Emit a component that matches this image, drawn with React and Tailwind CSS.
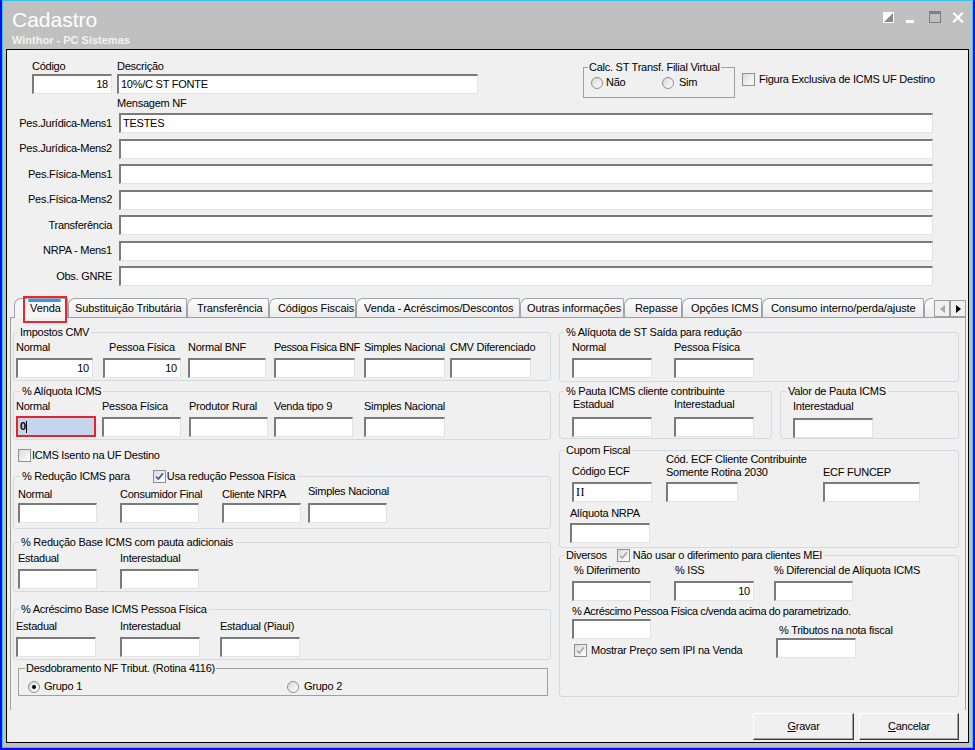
import React from 'react';

// Cadastro de figura tributária – aba Venda

const boxBase =
  'h-[20px] flex items-center bg-white border-t-2 border-l-2 border-t-[#7b7b7b] border-l-[#7b7b7b] border-b border-r border-b-[#e3e3e3] border-r-[#e3e3e3] px-[2px] leading-[13px]';
const boxActive =
  'h-[21px] flex items-center bg-[#c6d4ee] border-2 border-[#e4262c] px-[2px] leading-[13px] font-bold';

function TextBox({ value, right, serif, active, className = '' }) {
  return (
    <div className={`${active ? boxActive : boxBase} ${right ? 'justify-end pr-[3px]' : ''} ${className}`}>
      <span className={serif ? "font-['Liberation_Serif',serif] text-[12px] tracking-[0.5px]" : ''}>{value}</span>
      {active && <span className="w-px h-[12px] bg-black" />}
    </div>
  );
}

function Field({ label, className = '', labelClass = '', gap = 'mt-[4px]', value, right, serif, active }) {
  return (
    <div className={`flex flex-col shrink-0 ${className}`}>
      <div className={`h-[13px] leading-[13px] whitespace-nowrap ${labelClass}`}>{label}</div>
      <TextBox value={value} right={right} serif={serif} active={active} className={gap} />
    </div>
  );
}

function Group({ title, className = '', legendClass = 'ml-[4px] px-[2px]', classic, children }) {
  return (
    <fieldset
      className={`min-w-0 border ${classic ? 'border-[#a0a0a0]' : 'border-[#d3dae0] rounded-[3px]'} ${className}`}
    >
      <legend className={`h-[13px] leading-[13px] whitespace-nowrap ${legendClass}`}>{title}</legend>
      {children}
    </fieldset>
  );
}

function Check({ checked, disabled }) {
  return (
    <span className="w-[13px] h-[13px] shrink-0 border border-[#8e8f8f] bg-gradient-to-br from-[#dadada] to-white flex items-center justify-center">
      {checked && (
        <svg width="9" height="9" viewBox="0 0 9 9">
          <path
            d="M1 4.5 L3.4 7 L8 1.2"
            fill="none"
            stroke={disabled ? '#a8a8a8' : '#3f5a9c'}
            strokeWidth="1.8"
          />
        </svg>
      )}
    </span>
  );
}

function Radio({ checked }) {
  return (
    <span className="w-[12px] h-[12px] shrink-0 rounded-full border border-[#8e8f8f] bg-gradient-to-br from-[#d8d8d8] to-white flex items-center justify-center">
      {checked && <span className="w-[4px] h-[4px] rounded-full bg-black" />}
    </span>
  );
}

const mensagens = [
  ['Pes.Jurídica-Mens1', 'TESTES'],
  ['Pes.Jurídica-Mens2', ''],
  ['Pes.Física-Mens1', ''],
  ['Pes.Física-Mens2', ''],
  ['Transferência', ''],
  ['NRPA - Mens1', ''],
  ['Obs. GNRE', ''],
];

const tabs = [
  { label: 'Venda', cls: 'w-[54px] pl-[15px]', active: true },
  { label: 'Substituição Tributária', cls: 'w-[119px] pl-[6px]' },
  { label: 'Transferência', cls: 'w-[82px] pl-[9px]' },
  { label: 'Códigos Fiscais', cls: 'w-[87px] pl-[8px]' },
  { label: 'Venda - Acréscimos/Descontos', cls: 'w-[164px] pl-[7px]' },
  { label: 'Outras informações', cls: 'w-[104px] pl-[6px]' },
  { label: 'Repasse', cls: 'w-[58px] pl-[10px]' },
  { label: 'Opções ICMS', cls: 'w-[80px] pl-[8px]' },
  { label: 'Consumo interno/perda/ajuste', cls: 'w-[162px] pl-[8px]' },
];

function TitleBar() {
  return (
    <div className="h-[48px] shrink-0 flex justify-between">
      <div className="pl-[9px] pt-[7px] tracking-normal">
        <div className="text-[21px] leading-[24px] text-white">Cadastro</div>
        <div className="font-bold leading-[13px] mt-[2px] text-[#f2f2f2]">Winthor - PC Sistemas</div>
      </div>
      <div className="flex items-start pt-[10px] pr-[8px]">
        <svg width="11" height="11" viewBox="0 0 11 11" className="mt-[1px]">
          <rect x="0.5" y="0.5" width="10" height="10" fill="#8a8a8a" stroke="#fff" />
          <path d="M0 11 L0 0 L11 0 Z" fill="#fff" />
        </svg>
        <svg width="8" height="3" viewBox="0 0 8 3" className="ml-[12px] mt-[9px]">
          <rect width="8" height="3" fill="#fff" />
        </svg>
        <svg width="12" height="12" viewBox="0 0 12 12" className="ml-[15px]">
          <rect x="0.5" y="0.5" width="11" height="11" fill="none" stroke="#7f7f7f" />
          <rect width="12" height="3" fill="#7f7f7f" />
        </svg>
        <svg width="12" height="11" viewBox="0 0 12 11" className="ml-[11px] mt-[1px]">
          <path d="M1.2 0.8 L10.8 10.2 M10.8 0.8 L1.2 10.2" stroke="#fff" strokeWidth="2.2" />
        </svg>
      </div>
    </div>
  );
}

function TopSection() {
  return (
    <>
      <div className="flex items-start h-[37px] mt-[10px]">
        <Field label="Código" value="18" right gap="mt-[1px]" className="ml-[25px] w-[80px]" />
        <Field label="Descrição" value="10%/C ST FONTE" gap="mt-[1px]" className="ml-[5px] w-[361px]" />
        <Group
          title="Calc. ST Transf. Filial Virtual"
          classic
          legendClass="ml-[4px] px-[1px]"
          className="ml-[105px] mt-[1px] w-[152px] h-[37px]"
        >
          <div className="flex pt-[2px] h-[15px] items-center">
            <div className="ml-[7px] w-[71px] flex items-center">
              <Radio />
              <span className="ml-[3px]">Não</span>
            </div>
            <div className="flex items-center">
              <Radio />
              <span className="ml-[5px]">Sim</span>
            </div>
          </div>
        </Group>
        <div className="flex items-center ml-[7px] mt-[13px] h-[13px]">
          <Check />
          <span className="ml-[4px] leading-[13px] whitespace-nowrap">Figura Exclusiva de ICMS UF Destino</span>
        </div>
      </div>
      <div className="ml-[110px] h-[13px] leading-[13px]">Mensagem NF</div>
      <div className="mt-[3px] flex flex-col gap-[5.5px]">
        {mensagens.map(([label, value]) => (
          <div key={label} className="flex items-center">
            <div className="w-[105px] text-right leading-[13px] whitespace-nowrap">{label}</div>
            <TextBox value={value} className="ml-[7px] w-[814px]" />
          </div>
        ))}
      </div>
    </>
  );
}

function TabStrip() {
  return (
    <div className="flex h-[19px] mt-[12px] ml-[7px] tracking-[-0.1px]">
      {tabs.map((t) => (
        <div
          key={t.label}
          className={`relative shrink-0 border-t border-l border-r border-[#9ea4ab] rounded-tl-[7px] rounded-tr-[2px] pt-[3px] leading-[13px] whitespace-nowrap ${
            t.active ? 'h-[20px] z-10 bg-[#f6f6f6]' : 'h-[19px] bg-gradient-to-b from-[#fdfdfd] to-[#ebebeb]'
          } ${t.cls}`}
        >
          {t.active && <div className="absolute left-[13px] top-0 w-[33px] h-[3px] rounded-full bg-[#3d95e8]" />}
          {t.label}
          {t.active && (
            <div className="absolute left-[8px] -top-[3px] w-[44px] h-[27px] border-2 border-[#e8262c] pointer-events-none" />
          )}
        </div>
      ))}
      <div className="w-[9px] h-[19px] shrink-0 border-t border-l border-[#9ea4ab] rounded-tl-[7px] bg-gradient-to-b from-[#fdfdfd] to-[#ebebeb]" />
      <div className="ml-[1px] mt-[2px] w-[16px] h-[17px] border border-[#a0a0a0] bg-[#f0f0f0] flex items-center justify-center">
        <svg width="5" height="8" viewBox="0 0 5 8">
          <path d="M5 0 L0 4 L5 8 Z" fill="#a8a8a8" />
        </svg>
      </div>
      <div className="mt-[2px] w-[16px] h-[17px] border border-[#a0a0a0] bg-[#f0f0f0] flex items-center justify-center">
        <svg width="5" height="8" viewBox="0 0 5 8">
          <path d="M0 0 L5 4 L0 8 Z" fill="#000" />
        </svg>
      </div>
    </div>
  );
}

function LeftColumn() {
  return (
    <div className="flex flex-col w-[538px] ml-[2px]">
      <Group title="Impostos CMV" className="mt-[8px] pt-[2px] pb-[2px]">
        <div className="flex">
          <Field label="Normal" value="10" right className="ml-[2px] w-[77px]" />
          <Field label="Pessoa Física" value="10" right labelClass="text-center" className="ml-[10px] w-[78px]" />
          <Field label="Normal BNF" className="ml-[7px] w-[78px]" />
          <Field label="Pessoa Física BNF" labelClass="tracking-[-0.5px]" className="ml-[8px] w-[81px]" />
          <Field label="Simples Nacional" className="ml-[9px] w-[81px]" />
          <Field label="CMV Diferenciado" className="ml-[5px] w-[81px]" />
        </div>
      </Group>

      <Group title="% Alíquota ICMS" className="mt-[4px] pt-[2px] pb-[2px]" legendClass="ml-[6px] px-[2px]">
        <div className="flex">
          <Field label="Normal" value="0" active className="ml-[2px] w-[80px]" gap="mt-[3px]" />
          <Field label="Pessoa Física" className="ml-[6px] w-[79px]" />
          <Field label="Produtor Rural" className="ml-[8px] w-[79px]" />
          <Field label="Venda tipo 9" className="ml-[6px] w-[79px]" />
          <Field label="Simples Nacional" className="ml-[11px] w-[81px]" />
        </div>
      </Group>

      <div className="flex items-center mt-[9px] h-[13px] ml-[5px]">
        <Check />
        <span className="ml-[1px] leading-[13px]">ICMS Isento na UF Destino</span>
      </div>

      <Group
        title={
          <span className="inline-flex items-center h-[13px] align-top">
            <span>% Redução ICMS para</span>
            <span className="ml-[23px]">
              <Check checked />
            </span>
            <span className="ml-[1px]">Usa redução Pessoa Física</span>
          </span>
        }
        legendClass="ml-[6px] px-[2px]"
        className="mt-[8px] pt-[5px] pb-[5px]"
      >
        <div className="flex">
          <Field label="Normal" gap="mt-[2px]" className="ml-[4px] w-[79px]" />
          <Field label="Consumidor Final" gap="mt-[2px]" className="ml-[23px] w-[79px]" />
          <Field label="Cliente NRPA" gap="mt-[2px]" className="ml-[23px] w-[79px]" />
          <Field label="Simples Nacional" gap="mt-[5px]" labelClass="-mt-[3px]" className="ml-[7px] w-[79px]" />
        </div>
      </Group>

      <Group
        title="% Redução Base ICMS com pauta adicionais"
        legendClass="ml-[5px] px-[2px]"
        className="mt-[7px] pt-[3px] pb-[2px]"
      >
        <div className="flex">
          <Field label="Estadual" className="ml-[4px] w-[79px]" />
          <Field label="Interestadual" className="ml-[23px] w-[79px]" />
        </div>
      </Group>

      <Group
        title="% Acréscimo Base ICMS Pessoa Física"
        legendClass="ml-[5px] px-[2px]"
        className="mt-[11px] pt-[4px] pb-[2px]"
      >
        <div className="flex">
          <Field label="Estadual" className="ml-[2px] w-[80px]" />
          <Field label="Interestadual" className="ml-[24px] w-[80px]" />
          <Field label="Estadual (Piauí)" className="ml-[20px] w-[80px]" />
        </div>
      </Group>

      <Group
        title="Desdobramento NF Tribut. (Rotina 4116)"
        classic
        legendClass="ml-[6px] px-[1px]"
        className="ml-[5px] w-[530px] mt-[2px] pt-[5px] pb-[2px]"
      >
        <div className="flex items-center h-[13px]">
          <div className="ml-[9px] w-[259px] flex items-center">
            <Radio checked />
            <span className="ml-[4px]">Grupo 1</span>
          </div>
          <div className="flex items-center">
            <Radio />
            <span className="ml-[5px]">Grupo 2</span>
          </div>
        </div>
      </Group>
    </div>
  );
}

function RightColumn() {
  return (
    <div className="flex flex-col w-[400px] ml-[8px]">
      <Group title="% Alíquota de ST Saída para redução" className="mt-[8px] pt-[2px] pb-[3px]">
        <div className="flex">
          <Field label="Normal" className="ml-[12px] w-[80px]" />
          <Field label="Pessoa Física" className="ml-[22px] w-[80px]" />
        </div>
      </Group>

      <div className="flex mt-[3px]">
        <Group title="% Pauta ICMS cliente contribuinte" className="w-[213px] shrink-0 pb-[1px]">
          <div className="flex">
            <Field label="Estadual" labelClass="pl-[1px]" gap="mt-[6px]" className="ml-[12px] w-[80px]" />
            <Field label="Interestadual" gap="mt-[6px]" className="ml-[22px] w-[80px]" />
          </div>
        </Group>
        <Group title="Valor de Pauta ICMS" legendClass="ml-[5px] px-[2px]" className="ml-[8px] flex-1 pt-[2px]">
          <div className="flex">
            <Field label="Interestadual" gap="mt-[5px]" className="ml-[12px] w-[80px]" />
          </div>
        </Group>
      </div>

      <Group title="Cupom Fiscal" className="mt-[5px] pb-[4px]" legendClass="ml-[4px] px-[2px]">
        <div className="flex items-end -mt-[4px]">
          <Field label="Código ECF" value="II" serif className="ml-[12px] w-[80px]" />
          <Field
            label={
              <>
                Cód. ECF Cliente Contribuinte
                <br />
                Somente Rotina 2030
              </>
            }
            labelClass="h-[26px]"
            gap="mt-[3px]"
            className="ml-[14px] w-[72px]"
          />
          <Field label="ECF FUNCEP" gap="mt-[3px]" className="ml-[85px] w-[97px]" />
        </div>
        <div className="flex mt-[5px]">
          <Field label="Alíquota NRPA" gap="mt-[3px]" className="ml-[10px] w-[80px]" />
        </div>
      </Group>

      <Group
        title={
          <span className="inline-flex items-center h-[13px] align-top">
            <span>Diversos</span>
            <span className="ml-[10px]">
              <Check checked disabled />
            </span>
            <span className="ml-[3px]">Não usar o diferimento para clientes MEI</span>
          </span>
        }
        className="mt-[1px] h-[148px] pt-[2px]"
      >
        <div className="flex">
          <Field label="% Diferimento" labelClass="pl-[2px]" className="ml-[12px] w-[79px]" />
          <Field label="% ISS" value="10" right labelClass="pl-[1px]" className="ml-[23px] w-[80px]" />
          <Field label="% Diferencial de Alíquota ICMS" className="ml-[20px] w-[79px]" />
        </div>
        <div className="flex items-start mt-[4px]">
          <div className="ml-[12px] w-[204px] shrink-0 flex flex-col">
            <div className="h-[13px] leading-[13px] whitespace-nowrap tracking-[-0.4px]">
              % Acréscimo Pessoa Física c/venda acima do parametrizado.
            </div>
            <TextBox className="mt-[1px] w-[79px]" />
            <div className="flex items-center mt-[5px] h-[13px]">
              <span className="ml-[2px]">
                <Check checked disabled />
              </span>
              <span className="ml-[4px] leading-[13px] whitespace-nowrap">Mostrar Preço sem IPI na Venda</span>
            </div>
          </div>
          <Field label="% Tributos na nota fiscal" labelClass="pl-[3px]" gap="mt-[1px]" className="mt-[19px] w-[80px]" />
        </div>
      </Group>
    </div>
  );
}

function Button({ children, className = '' }) {
  return (
    <div
      className={`h-[27px] flex items-center justify-center bg-[#f0f0f0] border border-t-white border-l-white border-b-[#3c3c3c] border-r-[#3c3c3c] shadow-[inset_-1px_-1px_0_#a0a0a0] leading-[13px] ${className}`}
    >
      {children}
    </div>
  );
}

export default function App() {
  return (
    <div className="w-[975px] h-[750px] overflow-hidden bg-[#0c0cf6] px-[2px] pb-[2px] font-['Liberation_Sans',Arial,sans-serif] text-[11px] text-black tracking-[-0.25px]">
      <div className="h-full border border-[#36c4ee] bg-[#c0c0c0] flex flex-col">
        <TitleBar />
        <div className="mx-[3px] h-[694px] shrink-0 border border-black bg-[#f0f0f0] flex flex-col">
          <TopSection />
          <TabStrip />
          <div className="ml-[3px] w-[956px] h-[393px] shrink-0 border-t border-l border-r border-[#a0a0a0] flex">
            <LeftColumn />
            <RightColumn />
          </div>
          <div className="flex ml-[3px] w-[956px] justify-end pr-[7px] mt-[3px]">
            <Button className="w-[101px]">
              <span className="underline">G</span>ravar
            </Button>
            <Button className="w-[100px] ml-[5px]">
              <span className="underline">C</span>ancelar
            </Button>
          </div>
        </div>
      </div>
    </div>
  );
}
